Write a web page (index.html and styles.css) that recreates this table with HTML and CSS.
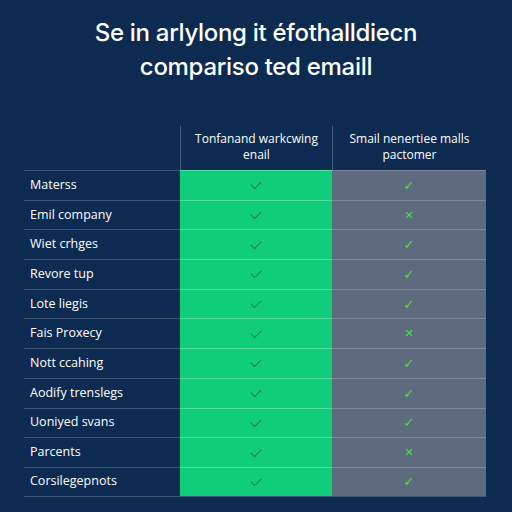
FILE: index.html
```html
<!DOCTYPE html>
<html>
<head>
<meta charset="utf-8">
<link rel="stylesheet" href="styles.css">
</head>
<body>
<div class="page">
  <h1 class="title">Se in arlylong it éfothalldiecn<br>compariso ted emaill</h1>
  <div class="table">
    <div class="head-row">
      <div class="hcell label-col"></div>
      <div class="hcell col-a">Tonfanand warkcwing<br>enail</div>
      <div class="hcell col-b">Smail nenertiee malls<br>pactomer</div>
    </div>
    <div class="row"><div class="label">Materss</div><div class="cell green"><span class="ck"></span></div><div class="cell gray"><span class="ok">✓</span></div></div>
    <div class="row"><div class="label">Emil company</div><div class="cell green"><span class="ck"></span></div><div class="cell gray"><span class="no">✕</span></div></div>
    <div class="row"><div class="label">Wiet crhges</div><div class="cell green"><span class="ck"></span></div><div class="cell gray"><span class="ok">✓</span></div></div>
    <div class="row"><div class="label">Revore tup</div><div class="cell green"><span class="ck"></span></div><div class="cell gray"><span class="ok">✓</span></div></div>
    <div class="row"><div class="label">Lote liegis</div><div class="cell green"><span class="ck"></span></div><div class="cell gray"><span class="ok">✓</span></div></div>
    <div class="row"><div class="label">Fais Proxecy</div><div class="cell green"><span class="ck"></span></div><div class="cell gray"><span class="no">✕</span></div></div>
    <div class="row"><div class="label">Nott ccahing</div><div class="cell green"><span class="ck"></span></div><div class="cell gray"><span class="ok">✓</span></div></div>
    <div class="row"><div class="label">Aodify trenslegs</div><div class="cell green"><span class="ck"></span></div><div class="cell gray"><span class="ok">✓</span></div></div>
    <div class="row"><div class="label">Uoniyed svans</div><div class="cell green"><span class="ck"></span></div><div class="cell gray"><span class="ok">✓</span></div></div>
    <div class="row"><div class="label">Parcents</div><div class="cell green"><span class="ck"></span></div><div class="cell gray"><span class="no">✕</span></div></div>
    <div class="row last"><div class="label">Corsilegepnots</div><div class="cell green"><span class="ck"></span></div><div class="cell gray"><span class="ok">✓</span></div></div>
  </div>
</div>
</body>
</html>
```
FILE: styles.css
```css
html, body {
  margin: 0;
  padding: 0;
}
body {
  width: 512px;
  height: 512px;
  background: #0d2a51;
  font-family: "Open Sans", "Liberation Sans", sans-serif;
  color: #ffffff;
  overflow: hidden;
}
.page {
  padding-top: 16px;
}
.title {
  margin: 0;
  text-align: center;
  font-family: "Inter", "Open Sans", sans-serif;
  font-size: 24px;
  font-weight: 500;
  line-height: 34px;
  letter-spacing: -0.3px;
}
.table {
  margin: 42px 0 0 24px;
  width: 462px;
}
.head-row {
  display: grid;
  grid-template-columns: 156px 152px 154px;
  height: 44px;
}
.hcell {
  font-size: 12px;
  line-height: 16px;
  text-align: center;
  padding-top: 5px;
  box-sizing: border-box;
  font-weight: 500;
}
.col-a {
  border-left: 1px solid rgba(255,255,255,0.22);
}
.col-b {
  border-left: 1px solid rgba(255,255,255,0.22);
}
.row {
  display: grid;
  grid-template-columns: 156px 152px 154px;
  height: 29.7px;
  border-top: 1px solid rgba(255,255,255,0.2);
  box-sizing: border-box;
}
.row.last {
  border-bottom: 1px solid rgba(255,255,255,0.2);
}
.label {
  font-size: 12.5px;
  font-weight: 500;
  display: flex;
  align-items: center;
  padding-left: 6px;
  padding-bottom: 2px;
}
.cell {
  display: flex;
  align-items: center;
  justify-content: center;
  margin-top: -1px;
}
.row .green {
  background: #10cd7b;
  border-top: 1px solid #4fdc9c;
}
.row .gray {
  background: #5e6b7f;
  border-top: 1px solid #7a8698;
}
.ck {
  width: 9px;
  height: 5px;
  border-left: 1.5px solid #1c7f45;
  border-bottom: 1.5px solid #1c7f45;
  transform: rotate(-45deg) translate(1px, -1px);
}
.ok, .no {
  color: #4fdc3a;
  font-size: 13px;
  font-weight: 700;
  font-family: "DejaVu Sans", sans-serif;
  line-height: 1;
}
.no {
  font-size: 11px;
}
```
